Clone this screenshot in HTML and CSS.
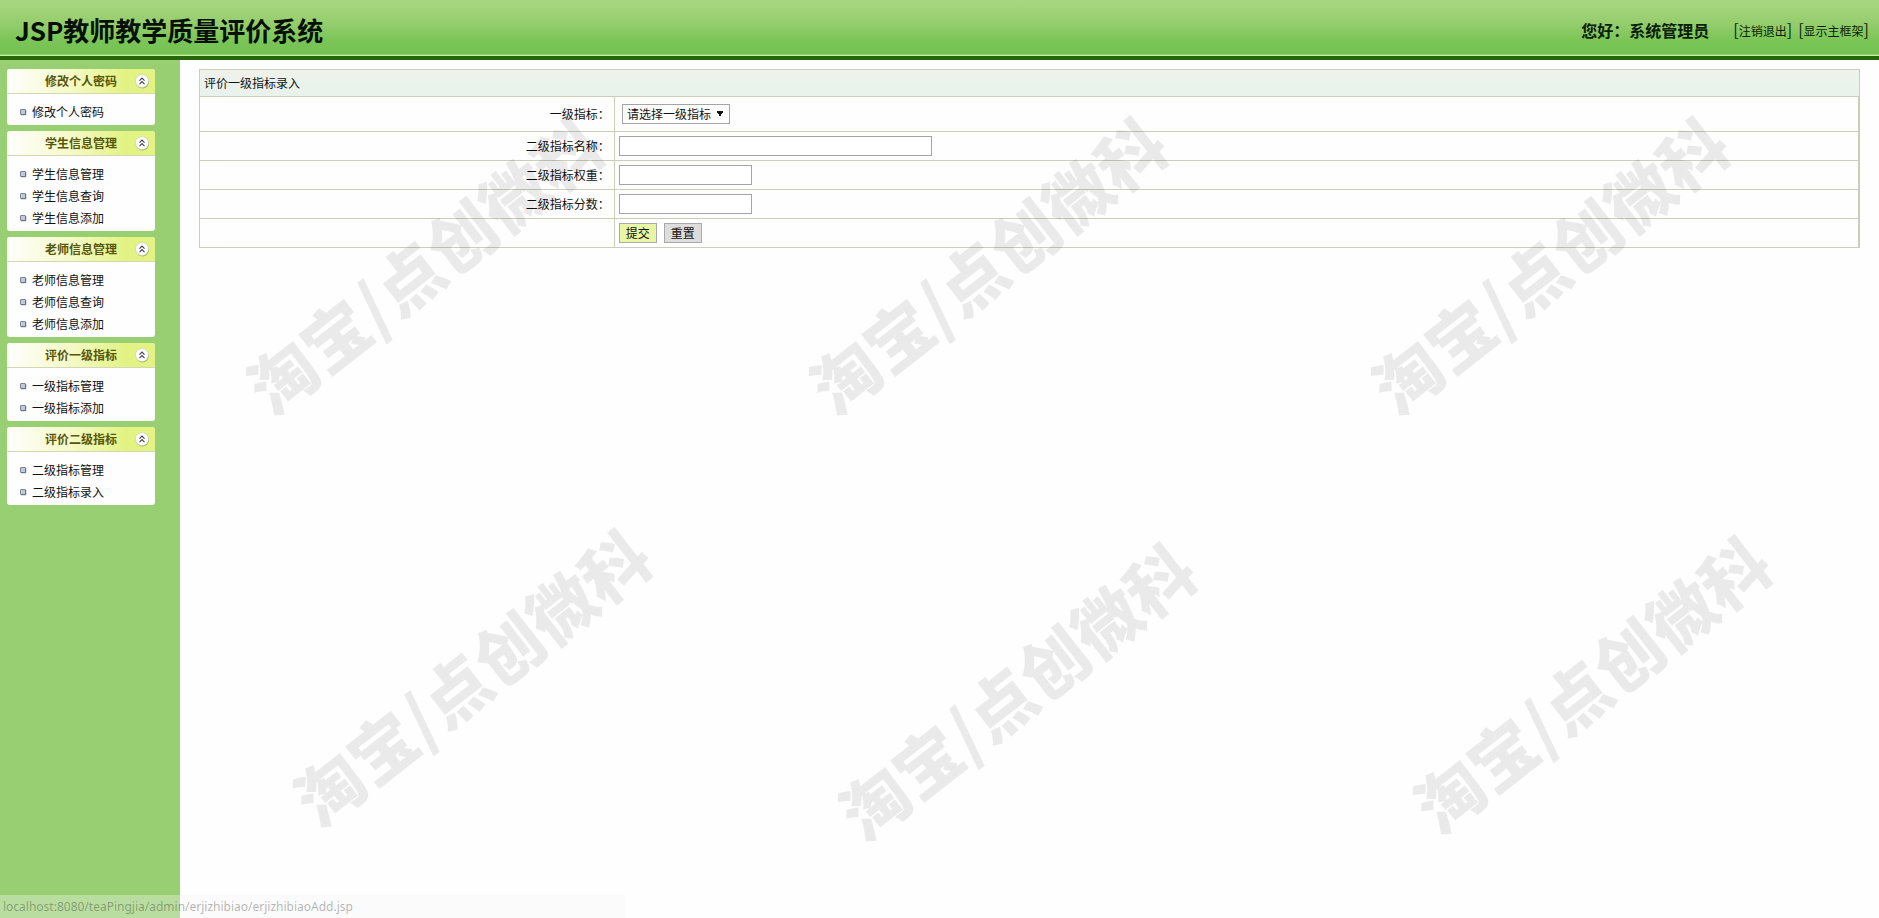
FILE: index.html
```html
<!DOCTYPE html>
<html lang="zh-CN">
<head>
<meta charset="utf-8">
<title>JSP教师教学质量评价系统</title>
<link rel="stylesheet" href="styles.css">
</head>
<body>
<svg class="defs" aria-hidden="true">
  <symbol id="fold" viewBox="0 0 16 16">
    <circle cx="8.500" cy="9" r="6.500" fill="#8c9a60" opacity=".7"/>
    <circle cx="8" cy="8" r="6.500" fill="#fff" stroke="#c9cdb4" stroke-width=".6"/>
    <path d="M5.500 7.700 8 5.200l2.500 2.500M5.500 11.200 8 8.700l2.500 2.500" fill="none" stroke="#40424e" stroke-width="1.200"/>
  </symbol>
  <symbol id="bullet" viewBox="0 0 8 8">
    <rect x="1.500" y="1.500" width="5" height="5" rx=".5" fill="#c3c9d4" stroke="#7b869c"/>
    <path d="M2 6.800h4.800V2" fill="none" stroke="#4a5470" stroke-width=".6"/>
  </symbol>
</svg>
<header class="topbar">
  <h1 class="brand">JSP教师教学质量评价系统</h1>
  <div class="user">
    <strong class="hello">您好：系统管理员</strong>
    <span class="action">[<a href="#logout">注销退出</a>]</span>
    <span class="action">[<a href="#frame">显示主框架</a>]</span>
  </div>
</header>
<div class="frame">
  <nav class="sidebar">
    <section class="card">
      <h2 class="card-title">修改个人密码<button class="fold" aria-label="折叠"><svg><use href="#fold"/></svg></button></h2>
      <ul class="menu">
        <li><svg><use href="#bullet"/></svg><a href="#password">修改个人密码</a></li>
      </ul>
    </section>
    <section class="card">
      <h2 class="card-title">学生信息管理<button class="fold" aria-label="折叠"><svg><use href="#fold"/></svg></button></h2>
      <ul class="menu">
        <li><svg><use href="#bullet"/></svg><a href="#student">学生信息管理</a></li>
        <li><svg><use href="#bullet"/></svg><a href="#student-search">学生信息查询</a></li>
        <li><svg><use href="#bullet"/></svg><a href="#student-add">学生信息添加</a></li>
      </ul>
    </section>
    <section class="card">
      <h2 class="card-title">老师信息管理<button class="fold" aria-label="折叠"><svg><use href="#fold"/></svg></button></h2>
      <ul class="menu">
        <li><svg><use href="#bullet"/></svg><a href="#teacher">老师信息管理</a></li>
        <li><svg><use href="#bullet"/></svg><a href="#teacher-search">老师信息查询</a></li>
        <li><svg><use href="#bullet"/></svg><a href="#teacher-add">老师信息添加</a></li>
      </ul>
    </section>
    <section class="card">
      <h2 class="card-title">评价一级指标<button class="fold" aria-label="折叠"><svg><use href="#fold"/></svg></button></h2>
      <ul class="menu">
        <li><svg><use href="#bullet"/></svg><a href="#first">一级指标管理</a></li>
        <li><svg><use href="#bullet"/></svg><a href="#first-add">一级指标添加</a></li>
      </ul>
    </section>
    <section class="card">
      <h2 class="card-title">评价二级指标<button class="fold" aria-label="折叠"><svg><use href="#fold"/></svg></button></h2>
      <ul class="menu">
        <li><svg><use href="#bullet"/></svg><a href="#second">二级指标管理</a></li>
        <li><svg><use href="#bullet"/></svg><a href="#second-add">二级指标录入</a></li>
      </ul>
    </section>
  </nav>
  <main class="content">
    <form>
      <table class="form">
        <colgroup><col class="label-col"><col></colgroup>
        <thead>
          <tr><th colspan="2" class="form-title">评价一级指标录入</th></tr>
        </thead>
        <tbody>
          <tr class="tall">
            <td class="label"><label for="parent">一级指标：</label></td>
            <td class="field"><select id="parent" class="parent"><option>请选择一级指标</option></select></td>
          </tr>
          <tr>
            <td class="label"><label for="name">二级指标名称：</label></td>
            <td class="field"><input id="name" class="text wide" type="text"></td>
          </tr>
          <tr>
            <td class="label"><label for="weight">二级指标权重：</label></td>
            <td class="field"><input id="weight" class="text" type="text"></td>
          </tr>
          <tr>
            <td class="label"><label for="score">二级指标分数：</label></td>
            <td class="field"><input id="score" class="text" type="text"></td>
          </tr>
          <tr>
            <td class="label"></td>
            <td class="field"><div class="buttons"><button type="submit" class="btn submit">提交</button><button type="reset" class="btn">重置</button></div></td>
          </tr>
        </tbody>
      </table>
    </form>
  </main>
</div>
<div class="marks" aria-hidden="true">
  <span class="mark m1">淘宝/点创微科</span>
  <span class="mark m2">淘宝/点创微科</span>
  <span class="mark m3">淘宝/点创微科</span>
  <span class="mark m4">淘宝/点创微科</span>
  <span class="mark m5">淘宝/点创微科</span>
  <span class="mark m6">淘宝/点创微科</span>
</div>
<div class="status">localhost:8080/teaPingjia/admin/erjizhibiao/erjizhibiaoAdd.jsp</div>
</body>
</html>
```
FILE: styles.css
```css
* { box-sizing: border-box; }
body {
  margin: 0;
  min-height: 100vh;
  display: flex;
  flex-direction: column;
  position: relative;
  background: #fefefe;
  color: #111;
  font: 12px/18px "Noto Sans CJK SC", sans-serif;
}
a { color: inherit; text-decoration: none; }
button, input, select { font: inherit; color: inherit; }
.defs { display: none; }

.topbar {
  height: 60px;
  display: flex;
  align-items: center;
  justify-content: space-between;
  padding: 4px 10px 0 15px;
  border-bottom: 4px solid #27660c;
  background: linear-gradient(#a9d781, #93cc6b 45%, #7cc658 70%, #75c052 97%, #c4f2a0 98%);
  color: #0a1f08;
}
.brand { margin: 0; font-size: 26px; line-height: 36px; color: #061006; }
.user { display: flex; align-items: center; }
.hello { font-size: 16px; line-height: 24px; margin-right: 18px; }
.action { font-size: 16px; line-height: 24px; margin-left: 6px; }
.action a { font-size: 12px; }

.frame { flex: 1; display: flex; }
.sidebar {
  width: 180px;
  flex: none;
  display: flex;
  flex-direction: column;
  gap: 6px;
  padding: 9px 25px 9px 7px;
  background: #99cf73;
}
.card { border-radius: 3px; overflow: hidden; background: #fefefe; }
.card-title {
  margin: 0;
  height: 25px;
  display: flex;
  align-items: center;
  justify-content: space-between;
  padding: 0 5px 0 38px;
  border-bottom: 1px solid #d3d8b4;
  background: linear-gradient(90deg, #fefef8 5%, #f4f9c4 45%, #e2f383 80%);
  color: #56560c;
  font-size: 12px;
}
.fold { width: 16px; height: 16px; padding: 0; border: 0; background: none; }
.fold svg { display: block; width: 16px; height: 16px; }
.menu { margin: 0; padding: 7px 0 2px 12px; list-style: none; }
.menu li { height: 22px; display: flex; align-items: center; gap: 5px; }
.menu svg { width: 8px; height: 8px; }

.content { flex: 1; padding: 9px 19px; }
.form { width: 100%; border-collapse: collapse; table-layout: fixed; }
.label-col { width: 25%; }
.form td, .form th { border: 1px solid #cbcfb8; padding: 0 4px; height: 29px; }
.form .form-title {
  height: 27px;
  text-align: left;
  font-weight: normal;
  background: linear-gradient(#f0f1eb, #e9f3ec 50%);
}
.form .tall td { height: 35px; }
.form .label { text-align: right; }
.form td.field { border-right-width: 2px; }
.text {
  display: block;
  width: 133px;
  height: 20px;
  padding: 0 2px;
  border: 1px solid #a4a4a4;
  background: #fff;
}
.wide { width: 313px; }
.parent {
  display: block;
  width: 108px;
  height: 20px;
  margin-left: 3px;
  padding: 0 4px;
  border: 1px solid #a4a4a4;
  border-radius: 0;
  appearance: none;
  background: conic-gradient(from 330deg at 50% 100%, #111 60deg, transparent 0) no-repeat right 6px center / 6px 6px #fefefe;
  line-height: 18px;
}
.buttons { display: flex; gap: 7px; }
.btn {
  width: 38px;
  height: 20px;
  padding: 0;
  border: 1px solid #a9a9a9;
  background: #ddd;
  line-height: 18px;
}
.submit { background: #e9f7a4; }

.marks { position: absolute; inset: 0; overflow: hidden; pointer-events: none; }
.mark {
  position: absolute;
  transform: translate(-50%, -50%) rotate(-38deg);
  color: rgba(0, 0, 0, .08);
  font-size: 67px;
  line-height: 67px;
  font-weight: 900;
  white-space: nowrap;
}
.m1 { left: 22.5%; top: 28.6%; }
.m2 { left: 52.5%; top: 28.6%; }
.m3 { left: 82.4%; top: 28.6%; }
.m4 { left: 25%; top: 73.5%; }
.m5 { left: 54%; top: 75%; }
.m6 { left: 84.6%; top: 74.3%; }

.status {
  position: absolute;
  left: 0;
  bottom: 0;
  width: 625px;
  height: 23px;
  padding-left: 3px;
  background: rgba(247, 247, 247, .35);
  color: rgba(0, 0, 0, .3);
  font: 12px/23px "Noto Sans", sans-serif;
}
```
